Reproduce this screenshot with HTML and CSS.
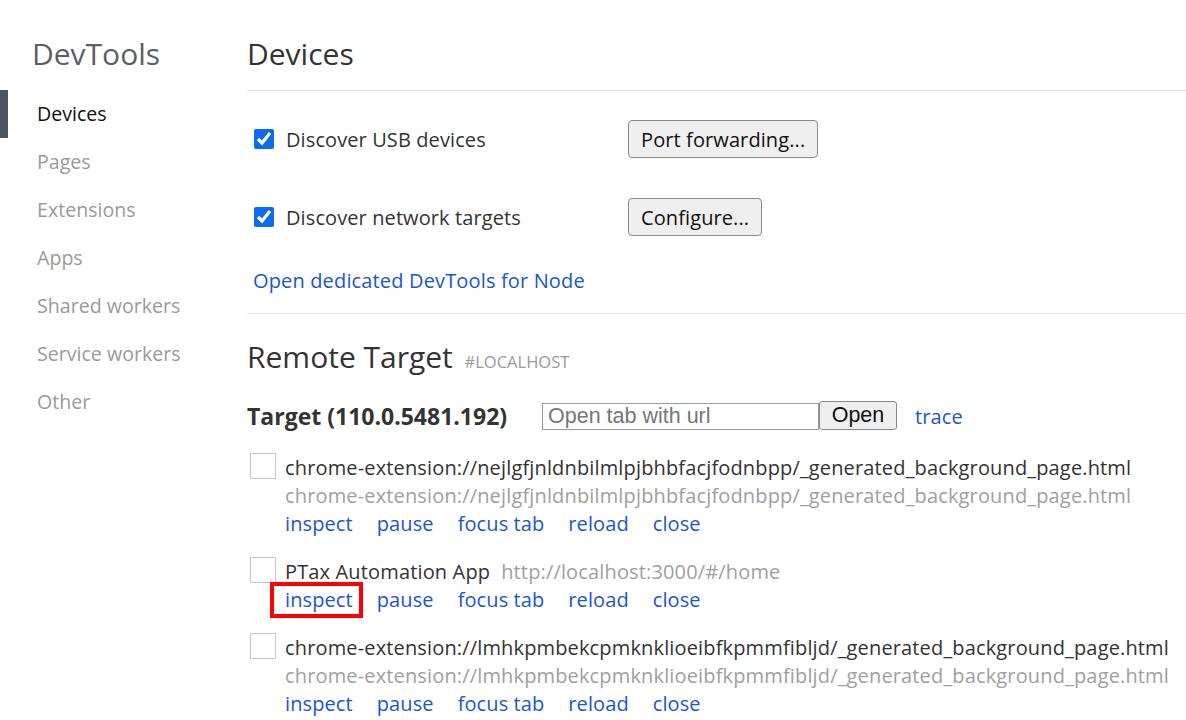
FILE: index.html
```html
<!DOCTYPE html>
<html>
<head>
<meta charset="utf-8">
<link rel="stylesheet" href="styles.css">
</head>
<body>
<div class="page">
  <nav class="sidebar">
    <div class="brand">DevTools</div>
    <ul class="nav">
      <li class="nav-item active">Devices</li>
      <li class="nav-item">Pages</li>
      <li class="nav-item">Extensions</li>
      <li class="nav-item">Apps</li>
      <li class="nav-item">Shared workers</li>
      <li class="nav-item">Service workers</li>
      <li class="nav-item">Other</li>
    </ul>
  </nav>
  <main class="content">
    <h1 class="page-title">Devices</h1>
    <section class="settings">
      <div class="setting-row">
        <label class="check-label"><input type="checkbox" class="check" checked><span>Discover USB devices</span></label>
        <button class="btn">Port forwarding...</button>
      </div>
      <div class="setting-row">
        <label class="check-label"><input type="checkbox" class="check" checked><span>Discover network targets</span></label>
        <button class="btn">Configure...</button>
      </div>
      <a class="link node-link">Open dedicated DevTools for Node</a>
    </section>
    <h2 class="section-title">Remote Target <span class="section-sub">#LOCALHOST</span></h2>
    <div class="target-row">
      <span class="target-name">Target (110.0.5481.192)</span>
      <input class="url-input" type="text" placeholder="Open tab with url">
      <button class="btn-open">Open</button>
      <a class="link trace">trace</a>
    </div>
    <div class="targets">
      <div class="target">
        <div class="thumb"></div>
        <div class="target-body">
          <div class="t-title">chrome-extension://nejlgfjnldnbilmlpjbhbfacjfodnbpp/_generated_background_page.html</div>
          <div class="t-url">chrome-extension://nejlgfjnldnbilmlpjbhbfacjfodnbpp/_generated_background_page.html</div>
          <div class="actions"><a class="link action">inspect</a><a class="link action">pause</a><a class="link action">focus tab</a><a class="link action">reload</a><a class="link action">close</a></div>
        </div>
      </div>
      <div class="target">
        <div class="thumb"></div>
        <div class="target-body">
          <div class="t-title">PTax Automation App<span class="t-url-inline">http://localhost:3000/#/home</span></div>
          <div class="actions"><a class="link action highlighted">inspect</a><a class="link action">pause</a><a class="link action">focus tab</a><a class="link action">reload</a><a class="link action">close</a></div>
        </div>
      </div>
      <div class="target">
        <div class="thumb"></div>
        <div class="target-body">
          <div class="t-title">chrome-extension://lmhkpmbekcpmknklioeibfkpmmfibljd/_generated_background_page.html</div>
          <div class="t-url">chrome-extension://lmhkpmbekcpmknklioeibfkpmmfibljd/_generated_background_page.html</div>
          <div class="actions"><a class="link action">inspect</a><a class="link action">pause</a><a class="link action">focus tab</a><a class="link action">reload</a><a class="link action">close</a></div>
        </div>
      </div>
    </div>
  </main>
</div>
</body>
</html>
```
FILE: styles.css
```css
* { box-sizing: border-box; }
html, body {
  margin: 0;
  padding: 0;
  background: #fff;
  overflow: hidden;
}
body {
  font-family: "Open Sans", "Noto Sans", sans-serif;
  font-size: 20px;
  letter-spacing: 0.15px;
  color: #303030;
}
.page {
  display: flex;
  width: 1186px;
  height: 720px;
}
.sidebar {
  width: 247px;
  flex: none;
}
.brand {
  margin-top: 34px;
  padding-left: 32px;
  font-size: 30px;
  line-height: 40px;
  letter-spacing: 0;
  color: #5a5f66;
}
.nav {
  list-style: none;
  margin: 16px 0 0;
  padding: 0;
}
.nav-item {
  height: 48px;
  line-height: 48px;
  padding-left: 29px;
  border-left: 8px solid transparent;
  color: #9a9a9a;
  font-size: 19.6px;
  letter-spacing: 0;
  white-space: nowrap;
}
.nav-item.active {
  border-left-color: #4d5560;
  color: #111;
}
.content {
  flex: 1;
  min-width: 0;
}
.page-title {
  margin: 34px 0 0;
  font-size: 30px;
  font-weight: 400;
  line-height: 40px;
  letter-spacing: 0;
  color: #333;
  padding-bottom: 16px;
  border-bottom: 1px solid #e6e6e6;
}
.settings {
  padding-top: 28px;
  padding-bottom: 18px;
  border-bottom: 1px solid #e6e6e6;
}
.setting-row {
  display: flex;
  align-items: center;
  height: 40px;
  margin-bottom: 38px;
}
.setting-row + .setting-row { margin-bottom: 30px; }
.check-label {
  width: 381px;
  display: flex;
  align-items: center;
  gap: 12px;
  padding-left: 7px;
  white-space: nowrap;
  color: #333;
  letter-spacing: 0.1px;
}
.check {
  width: 20px;
  height: 20px;
  margin: 0;
  accent-color: #0b6cf0;
}
.btn {
  font-family: "Open Sans", "Noto Sans", sans-serif;
  font-size: 20px;
  letter-spacing: 0.1px;
  color: #111;
  background: #efefef;
  border: 1px solid #8a8a8a;
  border-radius: 4px;
  height: 38px;
  padding: 0 12px;
}
.link {
  color: #1a55d6;
  text-decoration: none;
  cursor: pointer;
}
.node-link {
  display: block;
  padding-left: 6px;
  line-height: 28px;
}
.section-title {
  margin: 23px 0 0;
  font-size: 30px;
  font-weight: 400;
  line-height: 40px;
  letter-spacing: 0;
  color: #333;
}
.section-sub {
  font-size: 16.5px;
  color: #999;
  margin-left: 4px;
}
.target-row {
  display: flex;
  align-items: center;
  margin-top: 19px;
  height: 30px;
}
.target-name {
  font-weight: 700;
  font-size: 23px;
  letter-spacing: 0;
  color: #333;
  width: 295px;
  white-space: nowrap;
}
.url-input {
  width: 277px;
  height: 27px;
  border: 1px solid #9a9a9a;
  border-radius: 0;
  padding: 0 5px;
  font-family: "Liberation Sans", Arial, sans-serif;
  font-size: 21.5px;
  letter-spacing: 0;
  margin: 0;
}
.url-input::placeholder { color: #777; }
.btn-open {
  font-family: "Liberation Sans", Arial, sans-serif;
  font-size: 21.5px;
  color: #111;
  background: #efefef;
  border: 1px solid #8a8a8a;
  border-radius: 3px;
  height: 29px;
  width: 78px;
  padding: 0;
  margin: 0;
  position: relative;
  top: -1px;
}
.trace { margin-left: 18px; }
.targets {
  margin-top: 23px;
}
.target {
  display: flex;
  gap: 9px;
  margin-bottom: 20px;
}
.thumb {
  width: 26px;
  height: 26px;
  margin-left: 3px;
  margin-top: -1px;
  border: 1px solid #c8c8c8;
  flex: none;
}
.target-body {
  line-height: 28px;
  white-space: nowrap;
}
.t-title { color: #333; }
.t-url { color: #a0a0a0; }
.t-url-inline { color: #a0a0a0; margin-left: 11px; }
.actions { display: flex; gap: 24px; letter-spacing: 0.1px; }
.highlighted { position: relative; }
.highlighted::after {
  content: "";
  position: absolute;
  left: -15px;
  right: -10px;
  top: -4px;
  bottom: -4px;
  border: 4px solid #f00;
}
```
